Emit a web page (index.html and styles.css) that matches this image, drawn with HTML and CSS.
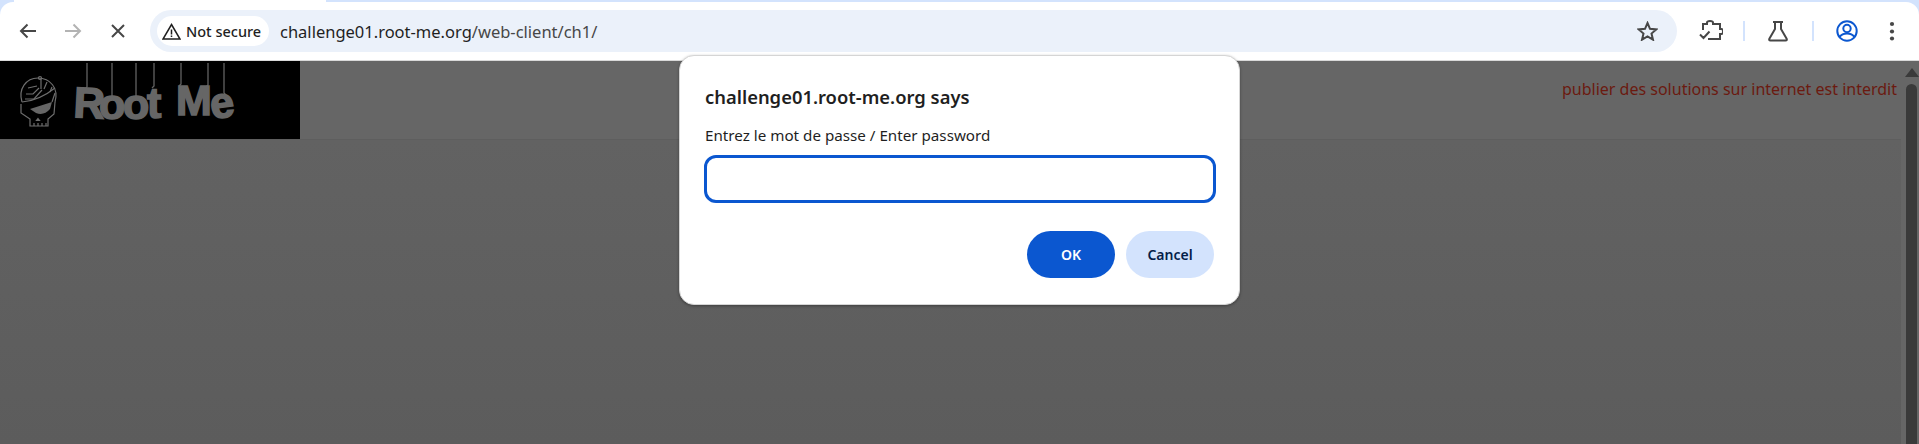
FILE: index.html
```html
<!doctype html>
<html>
<head>
<meta charset="UTF-8">
<title>challenge01.root-me.org/web-client/ch1/</title>
<link rel="stylesheet" href="styles.css">
</head>
<body>
<div class="chrome">
  <div class="tabstrip"><div class="tab"></div></div>
  <div class="toolbar">
    <div class="navbtn">
      <svg width="20" height="20" viewBox="0 0 20 20" class="ico"><path d="M18 10H3M9.500 3.500L3 10l6.500 6.500"/></svg>
    </div>
    <div class="navbtn off">
      <svg width="20" height="20" viewBox="0 0 20 20" class="ico"><path d="M2 10h15M10.500 3.500L17 10l-6.500 6.500"/></svg>
    </div>
    <div class="navbtn">
      <svg width="20" height="20" viewBox="0 0 20 20" class="ico"><path d="M4 4l12 12M16 4L4 16"/></svg>
    </div>
    <div class="omnibox">
      <div class="chip">
        <svg width="19" height="17" viewBox="0 0 19 17" class="ico thin"><path d="M9.500 1.500L18 16H1zM9.500 6.500v5M9.500 12.500v1.500"/></svg>
        <span>Not secure</span>
      </div>
      <div class="url">challenge01.root-me.org<span class="path">/web-client/ch1/</span></div>
      <svg width="21" height="20" viewBox="0 0 21 20" class="ico star"><path d="M10.500 2l2.500 5.800 6.300.6-4.800 4.100 1.500 6.200-5.500-3.300-5.500 3.300 1.500-6.200L1.700 8.400 8 7.800z"/></svg>
    </div>
    <div class="actions">
      <svg width="24" height="24" viewBox="0 0 24 24" class="ico"><path d="M4 11V5h4V3.500q0-1.500 3-1.500t3 1.500V5h7v5h1.500q1.500 0 1.500 2.500T22.500 15H21v5H9M1 15.500l3.500 3.500 6-6.500"/></svg>
      <div class="divider divider-a"></div>
      <svg width="24" height="24" viewBox="0 0 24 24" class="ico"><path d="M7 3h10M9 3v7L3.500 19.500q-1 2 1 2h15q2 0 1-2L15 10V3"/></svg>
      <div class="divider divider-b"></div>
      <svg width="24" height="24" viewBox="0 0 24 24" class="ico profile"><circle cx="12" cy="12" r="9.700"/><circle cx="12" cy="9.500" r="3.700"/><path d="M4.500 18q2.500-3.500 7.500-3.500t7.500 3.500"/></svg>
      <svg width="24" height="24" viewBox="0 0 24 24" class="dots"><circle cx="12" cy="5" r="2.100"/><circle cx="12" cy="12.500" r="2.100"/><circle cx="12" cy="19.500" r="2.100"/></svg>
    </div>
  </div>
</div>

<div class="page">
  <div class="main">
    <div class="banner">
      <svg class="logo" width="300" height="78" viewBox="0 0 300 78">
        <!-- skull -->
        <g class="skull">
          <path d="M22 41C18 28 26 17 38 17s21 10 17 24"/>
          <path d="M22 41c13-1 23-6 33-14M55 32l-3 9"/>
          <path d="M21 43v9l9 6v7h18v-7l6-5 1-12"/>
          <path d="M34 65v-3M38 65v-3M42 65v-3M46 65v-3"/>
          <path d="M30 48l22-7-2 7q-6 7-14 4z" class="eye"/>
          <path d="M38 57.500l1.500 2h-3z"/>
          <path d="M28 27l9-2M25 38h9l8-9M26 33h7l6-6M41 18v10M47 21l-3 7M52 26l-2 5"/>
          <circle cx="40" cy="17" r="1.500"/>
        </g>
        <!-- strings -->
        <g class="strings">
          <path d="M87 2v24l-2 2"/>
          <path d="M112 2v33l2 2"/>
          <path d="M136 2v33l-2 2"/>
          <path d="M154 2v23l-2 2"/>
          <path d="M181 2v21l-2 2"/>
          <path d="M208 2v22l-2 2"/>
          <path d="M224 2v30l2 2"/>
        </g>
        <g class="word">
          <text x="73" y="56" transform="rotate(3 73 56)">R</text>
          <text x="99" y="58">o</text>
          <text x="123" y="58">o</text>
          <text x="147" y="57">t</text>
          <text x="176" y="54">M</text>
          <text x="212" y="58" transform="rotate(-8 212 58)">e</text>
        </g>
      </svg>
      <div class="notice">publier des solutions sur internet est interdit</div>
    </div>
    <div class="content"></div>
  </div>
  <div class="scrollbar">
    <div class="sb-arrow"></div>
    <div class="sb-thumb"></div>
  </div>
</div>

<div class="dialog">
  <div class="dialog-title">challenge01.root-me.org says</div>
  <div class="dialog-msg">Entrez le mot de passe / Enter password</div>
  <input class="dialog-input" type="text">
  <div class="dialog-btns">
    <button class="btn btn-ok">OK</button>
    <button class="btn btn-cancel">Cancel</button>
  </div>
</div>
</body>
</html>
```

FILE: styles.css
```css
html, body { margin: 0; height: 100%; overflow: hidden; }
body { font-family: "Noto Sans", "Open Sans", sans-serif; background: #606060; display: flex; flex-direction: column; }

/* browser chrome */
.chrome { background: #d3e3fd; height: 61px; flex: none; }
.tabstrip { height: 2px; padding-left: 14px; }
.tab { width: 312px; height: 2px; background: #fff; }
.toolbar { height: 58px; background: #fff; border-bottom: 1px solid #d9d9d9; border-radius: 13px 13px 0 0; display: flex; align-items: center; padding-left: 5px; }
.ico { fill: none; stroke: #474747; stroke-width: 2; display: block; }
.ico.thin { stroke: #1f1f1f; stroke-width: 1.500; }
.navbtn { width: 45px; display: flex; justify-content: center; }
.navbtn.off .ico { stroke: #b3b3b3; }
.omnibox { flex: 1; height: 42px; margin-left: 10px; background: #ebf1fa; border-radius: 21px; display: flex; align-items: center; padding: 0 19px 0 7px; }
.chip { height: 30px; width: 112px; box-sizing: border-box; background: #fff; border-radius: 15px; display: flex; align-items: center; gap: 5px; padding-left: 5px; font-size: 14.500px; font-weight: 500; color: #1f1f1f; white-space: nowrap; }
.url { flex: 1; margin-left: 11px; font-size: 16.500px; color: #1f1f1f; white-space: nowrap; }
.url .path { color: #474747; }
.actions { width: 220px; padding-left: 22px; display: flex; align-items: center; gap: 21px; }
.divider { width: 2px; height: 20px; background: #d3e3fd; }
.divider-a { margin-left: -1px; }
.divider-b { margin-left: 1px; }
.ico.profile { stroke: #0b57d0; }
.dots { fill: #474747; display: block; }

/* page behind the dialog */
.page { flex: 1; display: flex; min-height: 0; }
.main { flex: 1; display: flex; flex-direction: column; }
.banner { height: 78px; flex: none; background: #666; border-bottom: 1px solid #5e5e5e; display: flex; justify-content: space-between; }
.logo { background: #000; display: block; flex: none; }
.skull { fill: none; stroke: #6e6e6e; stroke-width: 1.200; }
.skull .eye { fill: #666; stroke: none; }
.strings path { fill: none; stroke: #626262; stroke-width: 1.300; }
.word text { font-family: "Liberation Sans", sans-serif; font-weight: bold; font-size: 43px; fill: #666; stroke: #666; stroke-width: 1.600; }
.notice { color: #6b1a10; font-size: 16px; margin: 17px 4px 0 0; white-space: nowrap; }
.content { flex: 1; background: linear-gradient(#626262, #5c5c5c); }
.scrollbar { width: 18px; flex: none; background: #666; display: flex; flex-direction: column; align-items: center; padding: 7px 0 0 3px; box-sizing: border-box; }
.sb-arrow { width: 0; height: 0; border: 7px solid transparent; border-top: 0; border-bottom: 9px solid #3a3a3a; }
.sb-thumb { width: 11px; flex: 1; margin-top: 7px; background: #3a3a3a; border-radius: 6px 6px 0 0; }

/* prompt dialog */
.dialog { position: absolute; left: 679px; top: 55px; width: 561px; height: 250px; box-sizing: border-box; background: #fff; border: 1px solid #d5d5d5; border-radius: 15px; box-shadow: 0 1px 3px rgba(0,0,0,.35); padding: 28px 23px 0 24px; color: #1f1f1f; }
.dialog-title { font-size: 18.400px; font-weight: 600; line-height: 26px; padding-left: 1px; }
.dialog-msg { font-size: 15.200px; line-height: 20px; margin-top: 15px; padding-left: 1px; }
.dialog-input { display: block; width: 100%; height: 48px; box-sizing: border-box; margin-top: 10px; border: 3px solid #0b57d0; border-radius: 12px; outline: none; background: #fff; }
.dialog-btns { display: flex; justify-content: flex-end; gap: 11px; margin-top: 28px; padding-right: 2px; }
.btn { width: 88px; height: 47px; border: 0; border-radius: 24px; font-family: inherit; font-size: 14px; font-weight: 600; }
.btn-ok { background: #0b57d0; color: #fff; }
.btn-cancel { background: #d3e3fd; color: #041e49; }
```
